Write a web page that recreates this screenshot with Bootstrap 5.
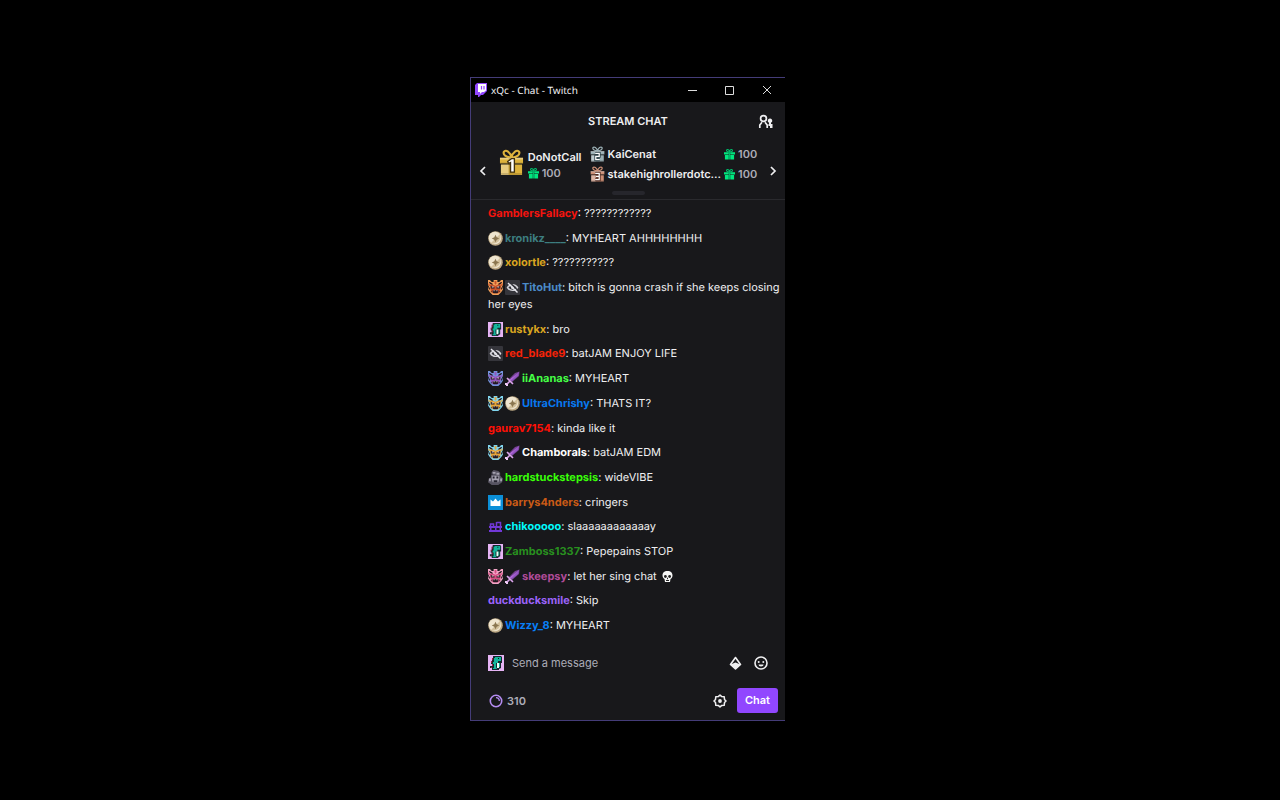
<!DOCTYPE html>
<html lang="en">
<head>
<meta charset="utf-8">
<meta name="viewport" content="width=device-width, initial-scale=1">
<title>xQc - Chat - Twitch</title>
<link href="https://cdn.jsdelivr.net/npm/bootstrap@5.3.0/dist/css/bootstrap.min.css" rel="stylesheet">
<style>
body{background:#000;color:#efeff1;font:400 11px/17px Inter,"Liberation Sans",sans-serif;padding:0 25px 2px 0;text-rendering:geometricPrecision}
button{background:none;border:0;padding:0;color:inherit;line-height:0}
svg{flex:none}
.chat-window{width:100%;max-width:315px;height:80.5vh;min-height:644px;background:#18181b;border:1px solid #443c78;border-right:0}
.title-bar{background:#000;height:24px;padding:0 12px 0 3px;font:400 10px/16px "Noto Sans","Open Sans",sans-serif}
.title-bar .controls{gap:27px}
.chat-head{height:39px}
.chat-head h1{font-size:11px;line-height:17px;font-weight:600;margin:0}
.leaders{height:59px;border-bottom:1px solid #2a2a2e}
.leaders .arrow{width:24px;padding-top:2px}
.leaders .first{width:96px;gap:4px;padding-left:4px;font-weight:600}
.leaders .first .who{line-height:16px}
.leaders .others{font-weight:600;padding:3px 4px 0 0}
.leaders .others .entry{height:20px;gap:3px}
.points{color:#adadb8;gap:3px;font-weight:600}
.handle{width:33px;height:4px;border-radius:2px;background:#26262c;left:141px;bottom:4px}
.messages{padding:5px 5px 11px 17px}
.messages svg{width:15px;height:15px;vertical-align:-4px;margin-right:2px}
.messages b{font-weight:700}
.composer{padding:0 17px 0 17px;height:36px;gap:8px}
.composer input{background:none;border:0;outline:0;color:#efeff1;padding:0;min-width:0}
.composer input::placeholder{color:#adadb8;opacity:1}
.chat-foot{height:39px;padding:0 7px 0 17px;gap:10px}
.send{background:#9147ff;color:#fff;border-radius:3px;font-weight:600;line-height:17px;padding:4px 8px}
</style>
</head>
<body class="min-vh-100 d-flex align-items-center justify-content-center">
<svg class="d-none" aria-hidden="true">
  <symbol id="gift" viewBox="0 0 12 12"><path fill="#00e67f" d="M0 4h5.200v2.500H0zM6.800 4H12v2.500H6.800zM1 7.200h4.200V12H1zM6.800 7.200H11V12H6.800z"/><path fill="none" stroke="#00b668" stroke-width="1.200" d="M6 4C3 4 2 2 3.300 1.200 5 .5 6 2.500 6 4c0-1.500 1-3.500 2.700-2.800C10 2 9 4 6 4v8"/></symbol>
  <symbol id="prize" viewBox="0 0 26 28"><path fill="none" stroke="currentColor" stroke-width="2.200" d="M13 9C7 8 4 6 5 3c2-3 7 0 8 6 1-6 6-9 8-6 1 3-2 5-8 6z"/><path fill="currentColor" d="M1 9h24v6H1zM2 16h22v11H2z"/><path fill="#fff" opacity=".35" d="M1 9h24v2H1zM2 16h8v11H2z"/><path fill="#000" opacity=".15" d="M1 14h24v2H1zM10 9h6v18h-6zM2 25h22v2H2z"/></symbol>
  <symbol id="coin" viewBox="0 0 15 15"><circle cx="7.500" cy="7.500" r="7.300" fill="#bda985"/><circle cx="7" cy="7" r="6.200" fill="#efe5cf"/><path fill="#d3c19c" d="M3 12 12 3a7 7 0 0 1-9 9z"/><path fill="#8b7650" d="m7.500 3.800 1.200 2.500 2.500 1.200-2.500 1.200-1.200 2.500-1.200-2.500-2.500-1.200 2.500-1.200z"/></symbol>
  <symbol id="hidden" viewBox="0 0 15 15"><rect width="15" height="15" rx="1" fill="#35353b"/><path fill="none" stroke="#d4d4da" stroke-width="1.400" d="M2.500 7.500C5 3.700 10 3.700 12.500 7.500 10 11.300 5 11.300 2.500 7.500z"/><circle cx="7.500" cy="7.500" r="1.500" fill="#d4d4da"/><path stroke="#35353b" stroke-width="1.300" d="m4.500 2 9 9"/><path stroke="#e8e8ee" stroke-width="1.400" d="m3 3 9.500 9.500"/></symbol>
  <symbol id="dino" viewBox="0 0 16 16"><rect width="16" height="16" fill="#e6b4f5"/><path fill="#14282d" d="M5 1h8l1 1v6h-1v5l-2 1v1H4v-2H2v-2h2V9H3V6h1V3h1z"/><path fill="#13b59c" d="M7 2h6v4h-3v2H8v4l1 2H5v-1h1V9H5V7h1V3h1zM11 8h1v4h-1z"/><path fill="#e7fff6" d="M9 8h2v5H9z"/><path fill="#9b243f" d="M4 3h1v2H4zM3 6h1v2H3zM4 9h1v2H4zM3 12h1v1H3z"/><path fill="#071519" d="M10 3h1v1h-1z"/></symbol>
  <symbol id="sword" viewBox="0 0 15 15"><path fill="#744094" d="M14.500.5 14 5 7 11 4 8 10 2z"/><path fill="#c979ee" d="M14 1 5 8.500l1 1z"/><path fill="#9456c4" d="m14 1-8 8 1 1 6-5z"/><path stroke="#dca5ed" stroke-width="1.600" d="m2 7 6 6M5 10l-4 4"/><path fill="#f0ccf6" d="M0 12h2v1h1v2H1v-1H0z"/></symbol>
  <symbol id="mask" viewBox="0 0 16 16"><path fill="var(--edge)" d="M0 0h2l2 2h2V0h4v2h2l2-2h2v5l-1 2 1 3-2 3-3 3H5l-3-3-2-3 1-3-1-2z"/><path fill="currentColor" d="M3 4l5 2 5-2 1 2-1 6-2 2H5l-2-2-1-6zM7 1h2v3l-1 1-1-1zM0 4h1l2 2H1zM16 4h-1l-2 2h2z"/><path fill="#24171f" d="M1 2h1l3 2v1L2 4zM15 2h-1l-3 2v1l3-1zM3 6l4 2v1H3zM13 6 9 8v1h4zM5 11h6v2l-1 1H6l-1-1zM1 8h1v2H1zM14 8h1v2h-1zM3 12h1v1H3zM12 12h1v1h-1z"/><path fill="#fff" opacity=".85" d="M4 7h2v1H4zM10 7h2v1h-2zM6 11h1v1H6zM9 11h1v1H9z"/></symbol>
  <symbol id="golem" viewBox="0 0 16 16"><path fill="#565361" d="M4 2 6 0l5 1 2 2v3l3 3-1 4-4 3H4l-4-3 1-4 2-1z"/><path fill="#a4a1af" d="M5 2h3v2H5zM9 3h3v2H9zM4 6h8v3l-1 4H5L4 9zM1 9h2v3H1zM13 9h2v3h-2z"/><path fill="#25232f" d="M5 7h2v2H5zM9 7h2v2H9zM6 11h4v2H6zM3 4h2v1H3z"/></symbol>
  <symbol id="crown" viewBox="0 0 15 15"><rect width="15" height="15" fill="#0b8fd8"/><path fill="#fff" d="m2.500 4.500 2.500 2 2.500-3 2.500 3 2.500-2V11h-10z"/></symbol>
  <symbol id="train" viewBox="0 0 15 15"><path fill="none" stroke="#7138d6" stroke-width="1.500" d="M2.500 8V5h3v3M8.500 8V3M8.500 3.500h4V8"/><path fill="#7138d6" d="M1 7h13v2H1zM2 9h1.500v3H2zM11.500 9H13v3h-1.500zM1 11h13v2H1zM7 9h1.500v2H7z"/></symbol>
  <symbol id="skull" viewBox="0 0 15 15"><path fill="#f6f6f6" d="M7.500 2c3.500 0 5 2 5 4.500 0 2-1 3-2 3.500L10 13H5l-.5-3c-1-.5-2-1.500-2-3.500C2.500 4 4 2 7.500 2z"/><circle cx="5.400" cy="7.500" r="1.400" fill="#222"/><circle cx="9.600" cy="7.500" r="1.400" fill="#222"/><path stroke="#222" d="M7.500 8.700v1.500M6 11.500h3"/></symbol>
</svg>

<main class="chat-window d-flex flex-column">
  <header class="title-bar d-flex align-items-center">
    <svg width="13" height="14" viewBox="0 0 13 14"><path fill="#9147ff" d="M1 2 3 0h10v8l-4 4H7l-2 2H4v-2H1z"/><path fill="#fff" d="M4 1h8v6.500L10 9H8l-2 2V9H4z"/><path stroke="#9147ff" stroke-width="1.200" d="M7.500 3v3.500M10 3v3.500"/></svg>
    <span class="ms-1">xQc - Chat - Twitch</span>
    <div class="controls d-flex ms-auto">
      <button aria-label="Minimize"><svg width="10" height="10" viewBox="0 0 10 10"><path stroke="#ddd" d="M1 5.500h9"/></svg></button>
      <button aria-label="Maximize"><svg width="10" height="10" viewBox="0 0 10 10"><path fill="none" stroke="#ddd" d="M1.500 1.500h8v8h-8z"/></svg></button>
      <button aria-label="Close"><svg width="12" height="10" viewBox="0 0 12 10"><path stroke="#ddd" d="m2 1 8 8M10 1 2 9"/></svg></button>
    </div>
  </header>

  <div class="chat-head d-flex align-items-center position-relative justify-content-center">
    <h1>STREAM CHAT</h1>
    <button class="position-absolute end-0 me-2 pe-1" aria-label="Users in chat"><svg width="15" height="15" viewBox="0 0 15 15"><g fill="none" stroke="#efeff1" stroke-width="1.700"><circle cx="5.500" cy="4.500" r="2.900"/><path d="M1.800 14v-3L4 8.300M9.200 14v-3L7 8.300"/></g><path fill="#efeff1" d="M12 4.500a2.200 2.200 0 0 1 1 4.200V10h1.500v4H12v-2h-1.500v-2h.5V8.700a2.200 2.200 0 0 1 1-4.200z"/></svg></button>
  </div>

  <section class="leaders d-flex position-relative" aria-label="Gift leaderboard">
    <button class="arrow" aria-label="Previous"><svg width="8" height="10" viewBox="0 0 8 10"><path fill="none" stroke="#efeff1" stroke-width="1.700" d="M6 1 2 5l4 4"/></svg></button>
    <div class="first d-flex pt-2">
      <svg width="25" height="27" viewBox="0 0 26 28" color="#deb33c"><use href="#prize"/><path d="m9 13 4-3h3v14h-4V14l-2 1z" fill="#fff" stroke="#40300e" stroke-width="1.400"/></svg>
      <div class="who">DoNotCall
        <div class="points d-flex align-items-center"><svg width="11" height="12"><use href="#gift"/></svg>100</div>
      </div>
    </div>
    <div class="others flex-fill">
      <div class="entry d-flex align-items-center"><svg width="15" height="16" viewBox="0 0 26 28" color="#9bb0b5"><use href="#prize"/><path fill="none" stroke="#293d43" stroke-width="5" d="M9 13h7v5h-6v6h7"/><path fill="none" stroke="#fff" stroke-width="2.200" d="M9 13h7v5h-6v6h7"/></svg><span class="flex-fill">KaiCenat</span><span class="points d-flex align-items-center"><svg width="11" height="12"><use href="#gift"/></svg>100</span></div>
      <div class="entry d-flex align-items-center"><svg width="15" height="16" viewBox="0 0 26 28" color="#cb8e75"><use href="#prize"/><path fill="none" stroke="#542e25" stroke-width="5" d="M9 13h7v11H9M10 18h6"/><path fill="none" stroke="#fff" stroke-width="2.200" d="M9 13h7v11H9M10 18h6"/></svg><span class="flex-fill">stakehighrollerdotc...</span><span class="points d-flex align-items-center"><svg width="11" height="12"><use href="#gift"/></svg>100</span></div>
    </div>
    <button class="arrow" aria-label="Next"><svg width="8" height="10" viewBox="0 0 8 10"><path fill="none" stroke="#efeff1" stroke-width="1.700" d="m2 1 4 4-4 4"/></svg></button>
    <div class="handle position-absolute"></div>
  </section>

  <div class="messages flex-fill d-flex flex-column justify-content-between" role="log">
    <div><b style="color:#f4140f">GamblersFallacy</b>: ????????????</div>
    <div><svg><use href="#coin"/></svg><b style="color:#3d7e80">kronikz____</b>: MYHEART AHHHHHHHH</div>
    <div><svg><use href="#coin"/></svg><b style="color:#daa520">xolortle</b>: ???????????</div>
    <div><svg color="#c9522a" style="--edge:#f2a05a"><use href="#mask"/></svg><svg><use href="#hidden"/></svg><b style="color:#4b8bc8">TitoHut</b>: bitch is gonna crash if she keeps closing her eyes</div>
    <div><svg><use href="#dino"/></svg><b style="color:#daa520">rustykx</b>: bro</div>
    <div><svg><use href="#hidden"/></svg><b style="color:#f52308">red_blade9</b>: batJAM ENJOY LIFE</div>
    <div><svg color="#9457bd" style="--edge:#7392dc"><use href="#mask"/></svg><svg><use href="#sword"/></svg><b style="color:#45ff45">iiAnanas</b>: MYHEART</div>
    <div><svg color="#e5a53b" style="--edge:#80d5ee"><use href="#mask"/></svg><svg><use href="#coin"/></svg><b style="color:#0878ef">UltraChrishy</b>: THATS IT?</div>
    <div><b style="color:#ff1006">gaurav7154</b>: kinda like it</div>
    <div><svg color="#e5a53b" style="--edge:#80d5ee"><use href="#mask"/></svg><svg><use href="#sword"/></svg><b style="color:#fff">Chamborals</b>: batJAM EDM</div>
    <div><svg><use href="#golem"/></svg><b style="color:#39ff08">hardstuckstepsis</b>: wideVIBE</div>
    <div><svg><use href="#crown"/></svg><b style="color:#cb5b16">barrys4nders</b>: cringers</div>
    <div><svg><use href="#train"/></svg><b style="color:#00fcff">chikooooo</b>: slaaaaaaaaaaaay</div>
    <div><svg><use href="#dino"/></svg><b style="color:#28901f">Zamboss1337</b>: Pepepains STOP</div>
    <div><svg color="#d64e83" style="--edge:#f3a4c6"><use href="#mask"/></svg><svg><use href="#sword"/></svg><b style="color:#b04b99">skeepsy</b>: let her sing chat <svg role="img" aria-label="skull"><use href="#skull"/></svg></div>
    <div><b style="color:#9b63fa">duckducksmile</b>: Skip</div>
    <div><svg><use href="#coin"/></svg><b style="color:#087ff5">Wizzy_8</b>: MYHEART</div>
  </div>

  <form class="composer d-flex align-items-center">
    <svg width="16" height="16"><use href="#dino"/></svg>
    <input class="flex-fill" type="text" placeholder="Send a message" aria-label="Send a message">
    <button type="button" aria-label="Bits"><svg width="13" height="14" viewBox="0 0 13 14"><path fill="none" stroke="#efeff1" stroke-width="1.600" stroke-linejoin="round" d="m6.500 1.500 5 7-5 4.500-5-4.500z"/><path fill="#efeff1" d="m1.500 8.500 5-2 5 2-5 4.500z"/></svg></button>
    <button type="button" class="ms-1" aria-label="Emotes"><svg width="14" height="14" viewBox="0 0 14 14"><circle cx="7" cy="7" r="6" fill="none" stroke="#efeff1" stroke-width="1.600"/><circle cx="4.700" cy="6" r="1" fill="#efeff1"/><circle cx="9.300" cy="6" r="1" fill="#efeff1"/><path fill="#efeff1" d="M4.500 8.500h5a2.500 2 0 0 1-5 0z"/></svg></button>
  </form>
  <footer class="chat-foot d-flex align-items-center">
    <button class="points d-flex align-items-center" aria-label="Channel points"><svg width="16" height="14" viewBox="0 0 16 14"><circle cx="8" cy="7" r="5.700" fill="none" stroke="#b58cf2" stroke-width="1.600"/><path fill="none" stroke="#b58cf2" stroke-width="1.300" d="M8 3.700A3.300 3.300 0 0 1 11.300 7"/></svg>310</button>
    <button class="ms-auto" aria-label="Chat settings"><svg width="14" height="14" viewBox="0 0 14 14"><path fill="none" stroke="#efeff1" stroke-width="1.500" stroke-linejoin="round" d="m7 1 1.500 1.400 2.700.3.300 2.700L13 7l-1.500 1.600-.3 2.700-2.700.3L7 13l-1.500-1.400-2.700-.3-.3-2.700L1 7l1.500-1.600.3-2.700 2.700-.3z"/><circle cx="7" cy="7" r="1.900" fill="#efeff1"/></svg></button>
    <button class="send">Chat</button>
  </footer>
</main>
<script src="https://cdn.jsdelivr.net/npm/bootstrap@5.3.0/dist/js/bootstrap.bundle.min.js"></script>
</body>
</html>
